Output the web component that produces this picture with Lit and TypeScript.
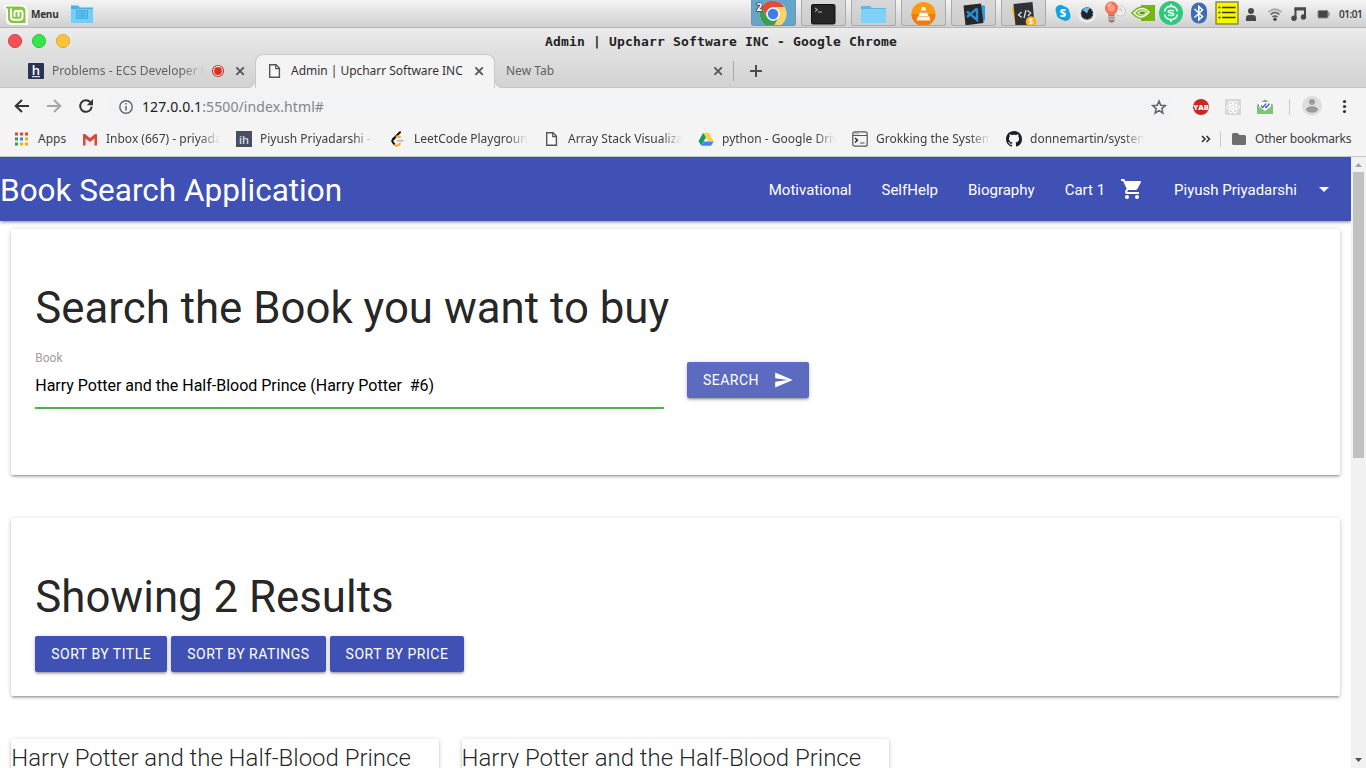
import { LitElement, html, svg, css } from "lit";
import { customElement } from "lit/decorators.js";

// Every glyph is drawn in desktop coordinates; the viewBox is the cell it occupies.
const glyph = (x: number, y: number, w: number, h: number, body: unknown) =>
  html`<svg class="glyph" width=${w} height=${h} viewBox="${x} ${y} ${w} ${h}" aria-hidden="true">${body}</svg>`;

const cross = (x: number) => glyph(x - 8, 63, 16, 16, svg`<path d="M${x - 3.6} 67.4l7.4 7.4m0-7.4l-7.4 7.4" stroke="#555" stroke-width="1.8" fill="none"/>`);

const page = svg`<path d="M2.7 1.7h6.3l3.4 3.5v9.1H2.7z" fill="#fafafa" stroke="#555" stroke-width="1.4"/><path d="M8.7 1.7v3.9h3.7" fill="none" stroke="#555" stroke-width="1.2"/>`;

const bookmarks = [
  { label: "Inbox (667) - priyadarshi", art: svg`<path d="M1.5 3h13v11.5h-13z" fill="#eee"/><path d="M1 14.5V3.6L8 9.3l7-5.7v10.9h-2.5V7.4L8 11 3.500 7.400v7.100z" fill="#d54b3d"/><path d="M1 3h2l5 4 5-4h2v2L8 10 1 5z" fill="#d54b3d"/>` },
  { label: "Piyush Priyadarshi - Int", art: svg`<path d="M0 0h16v16H0z" fill="#484f60"/><text x="8" y="12.500" text-anchor="middle" font-size="11" font-weight="600" fill="#d8dbe2" font-family="Open Sans, sans-serif">ih</text>` },
  { label: "LeetCode Playground", art: svg`<path d="M10 1.300L3.200 8.200" stroke="#111" stroke-width="2" fill="none" stroke-linecap="round"/><path d="M5 6.300L2.700 8.700q-1 1.300 0 2.500l2 2.400" stroke="#111" stroke-width="2" fill="none"/><path d="M4.500 13.500q2.500 2.500 4.500 0l1.500-1.300M6 6.200q2-1.900 4.600.5" stroke="#f9a825" stroke-width="2" fill="none"/><path d="M7 9.700h6.500" stroke="#bbb" stroke-width="1.800"/>` },
  { label: "Array Stack Visualization", art: page },
  { label: "python - Google Drive", art: svg`<path d="M5.300 1.700L8 6.300 3.200 14.600.5 10.200z" fill="#0f9d58"/><path d="M5.300 1.700h5.200l5.200 8.700h-5.200z" fill="#ffcd40"/><path d="M5.700 10.400h10L13 14.700H3.200z" fill="#4285f4"/>` },
  { label: "Grokking the System Design", art: svg`<rect x=".8" y=".8" width="14.400" height="14.400" rx="2" fill="none" stroke="#555" stroke-width="1.200"/><path d="M1 4.500h14" stroke="#555"/><path d="M2.500 2.700h4.500" stroke="#555" stroke-dasharray="1 1"/><path d="M3 7l2.500 2.300L3 11.600" fill="none" stroke="#222" stroke-width="1.400"/><path d="M8 12h4.500" stroke="#777" stroke-width="1.300"/>` },
  { label: "donnemartin/system-design", art: svg`<path fill="#1b1f23" d="M8 0C3.580 0 0 3.580 0 8c0 3.540 2.290 6.530 5.470 7.590.4.070.55-.17.55-.38 0-.19-.01-.82-.01-1.490-2.010.37-2.530-.49-2.690-.94-.09-.23-.48-.94-.82-1.130-.28-.15-.68-.52-.01-.53.63-.01 1.080.58 1.230.82.72 1.210 1.870.87 2.330.66.070-.52.28-.87.51-1.070-1.780-.2-3.640-.89-3.640-3.950 0-.87.31-1.590.82-2.150-.08-.2-.36-1.020.08-2.120 0 0 .67-.21 2.200.82.64-.18 1.320-.27 2-.27s1.360.09 2 .27c1.530-1.040 2.200-.82 2.200-.82.44 1.100.16 1.920.08 2.120.51.56.82 1.270.82 2.150 0 3.070-1.870 3.750-3.650 3.950.29.25.54.73.54 1.480 0 1.070-.01 1.930-.01 2.200 0 .21.15.46.55.38A8.010 8.010 0 0016 8c0-4.420-3.580-8-8-8z"/>` },
];

const apps = [
  svg`<circle cx="773" cy="14" r="13.300" fill="#fff"/><path d="M761.480 7.350A13.300 13.300 0 01784.520 7.350H773A6.700 6.700 0 00767.200 17.350z" fill="#e24a3d"/><path d="M784.520 7.350A13.300 13.300 0 01773 27.300L778.800 17.350A6.700 6.700 0 00773 7.350z" fill="#fdd365"/><path d="M773 27.300A13.300 13.300 0 01761.480 7.350L767.200 17.350A6.700 6.700 0 00778.800 17.350z" fill="#3b9d52"/><circle cx="773" cy="14" r="6.600" fill="#eef4fa"/><circle cx="773" cy="14" r="5.200" fill="#3d7ee8"/><text x="756.500" y="11" fill="#fff" stroke="#345" stroke-width="1.500" paint-order="stroke" font-size="10" font-weight="700" font-family="Open Sans, sans-serif">2</text>`,
  svg`<rect x="811.500" y="4.500" width="23.500" height="19.500" rx="1.500" fill="#262626" stroke="#111"/><path d="M815 8l2.500 1.700L815 11.500" fill="none" stroke="#ccc"/><path d="M818 12h4" stroke="#bbb"/>`,
  svg`<path d="M861 6h9l2 2h14v14.500h-25z" fill="#59b8e8"/><path d="M861 9h25v14h-25z" fill="#7fd1f8"/>`,
  svg`<circle cx="923.500" cy="14" r="12" fill="#f99a11"/><path d="M911.500 14a12 12 0 0024 0z" fill="#f27c08"/><path d="M922.300 7h2.600l3.800 9.500h-10.200z" fill="#fff"/><path d="M920.800 10.500h5.600l.8 2.200h-7.200z" fill="#f6951b"/><path d="M918 16l1.300 1h8.600l1.300-1 1.300 4.500h-14z" fill="#f4f4f4"/>`,
  svg`<path d="M982 5l3 1v14.500l-14 3z" fill="#2f9ee0"/><path d="M963.500 5.500l17.500-2 2.500 19.500-18 2.300z" fill="#262728"/><path d="M977 8.500v11.500l-10-8.500m10-3L967 17" fill="none" stroke="#278fd8" stroke-width="2.400"/>`,
  svg`<path d="M1011.500 7.500l5-1.500 2 18-3 .5z" fill="#f9b521"/><path d="M1013.500 4l19-2 2 22-19 2z" fill="#2e3135"/><path d="M1021.500 12l-3 3 3.300 2.500m5.700-7l3.200 2.500-2.700 3m-2-6l-2 8" fill="none" stroke="#ddd" stroke-width="1.300"/><circle cx="1031" cy="21.500" r="5.300" fill="#fbb01c"/><text x="1031" y="24.500" text-anchor="middle" font-size="8" font-weight="700" fill="#fff" font-family="Open Sans, sans-serif">$</text>`,
];

const navLinks = ["Motivational", "SelfHelp", "Biography"];

@customElement("desktop-panel")
class DesktopPanel extends LitElement {
  static styles = css`
    :host { display: block; height: 28px; font-family: "Noto Sans", sans-serif; color: #333; }
    .bar { display: flex; height: 28px; box-sizing: border-box; border-bottom: 1px solid #b5b5b5; background: linear-gradient(#f4f4f4, #d0d0d0); }
    .glyph { display: block; flex: none; }
    .menu { width: 39px; font: 700 10px/28px "Open Sans", sans-serif; padding-left: 1px; letter-spacing: -0.25px; }
    .apps { display: flex; gap: 5px; margin-left: 656px; }
    .app { box-sizing: border-box; width: 45px; height: 26px; overflow: hidden; border: 1px solid #aaa; border-top: 0; border-radius: 0 0 3px 3px; background: linear-gradient(#d8d8d8, #cdcdcd); display: flex; justify-content: center; }
    .app.on { background: #65a5c9; border-color: #6d98b0; }
    .tray { display: flex; margin-left: 5px; }
    .clock { font: 600 10px/28px "Open Sans", sans-serif; white-space: nowrap; margin-left: 2px; letter-spacing: -0.5px; }
  `;
  render() {
    return html`<div class="bar">
      ${glyph(0, 0, 30, 28, svg`<path d="M4 5h18q6 0 6 7v13H12q-6 0-6-6V9H4z" fill="#fff"/><path d="M6 6.500h14.500q5 0 5 5V23H13q-5 0-5-5V8.500H6z" fill="#86c440"/><path d="M11 8.500v8.300q0 3 3 3h5.500q3 0 3-3v-4q0-2-2-2t-2 2v4m0-4q0-2-2-2t-2 2v4" fill="none" stroke="#fff" stroke-width="2"/>`)}
      <div class="menu">Menu</div>
      ${glyph(70, 0, 25, 28, svg`<path d="M71 5.500h7l2 2h13V23H71z" fill="#47b2e5"/><path d="M71 9h22v14H71z" fill="#73cff9"/><path d="M76.500 10.500h11v8h-11z" fill="#5cc0ee" stroke="#46aede"/><path d="M79 13h6m-6 3h6" stroke="#3da8da"/>`)}
      <div class="apps">${apps.map((a, i) => html`<div class="app ${i ? "" : "on"}">${glyph(752 + i * 50, 0, 43, 27, a)}</div>`)}</div>
      <div class="tray">
        ${glyph(1051, 0, 24, 28, svg`<circle cx="1060.500" cy="10" r="5" fill="#12a5e0"/><circle cx="1065.500" cy="16" r="5" fill="#12a5e0"/><circle cx="1063" cy="13" r="6.700" fill="#12a5e0"/><text x="1063" y="17" text-anchor="middle" font-size="11" font-weight="800" fill="#fff" font-family="Open Sans, sans-serif">S</text>`)}
        ${glyph(1075, 0, 24, 28, svg`<circle cx="1087" cy="13.500" r="9.700" fill="#e9e9e9"/><circle cx="1087" cy="13.500" r="6.200" fill="#1b2229"/><path d="M1087 13.500l-4.500-3.500q3.500-3.500 7-2z" fill="#68b8e8"/><circle cx="1087" cy="13.500" r="5.500" fill="none" stroke="#ccc" stroke-width=".8" stroke-dasharray="1 2"/>`)}
        ${glyph(1099, 0, 28, 28, svg`<circle cx="1120.500" cy="11" r="5" fill="#ededed" stroke="#ccc"/><path d="M1119 9q3-1 2.500 2.500" fill="none" stroke="#bbb"/><path d="M1108.500 15c0-2-3.500-3-3.500-7a6.500 6.500 0 0113 0c0 4-3.500 5-3.500 7z" fill="#f37158"/><circle cx="1111.300" cy="8" r="3.600" fill="#fb9c86"/><path d="M1107.500 6.500q1-3 4-3" fill="none" stroke="#ffc0ac" stroke-width="1.500"/><path d="M1108.500 15h6v6l-1.500 1.500h-3l-1.500-1.500z" fill="#8e7d6d"/><path d="M1108.500 17h6m-6 2.300h6" stroke="#ddd"/>`)}
        ${glyph(1127, 0, 30, 28, svg`<path d="M1141 5h14v16h-14z" fill="#77b510"/><path d="M1131 13q6-7 12-7 6 1 9 6-4 7-11 7-6-1-10-6z" fill="#77b510"/><path d="M1134 13q4-4.500 9-4.500 4 .8 6 3.500-4 5-8.500 5-4-1-6.500-4z" fill="none" stroke="#f5f8ec" stroke-width="1.500"/><path d="M1138 12.800q5-4 8.500 0-4 4.500-8.500 0z" fill="#5f9500" stroke="#e7efce" stroke-width="1.200"/>`)}
        ${glyph(1157, 0, 28, 28, svg`<circle cx="1171" cy="13" r="12" fill="#31c77f"/><path d="M1164.500 11.500a6.700 6.700 0 0113 0M1164.500 14.500a6.700 6.700 0 0013 0" fill="none" stroke="#eafff3" stroke-width="1.600"/><path d="M1171 4v3m0 12v3" stroke="#eafff3" stroke-width="1.700"/><path d="M1174 10.800q-5.500-1-5.800.7c0 2 5.600 1 5.600 3-.3 1.500-4 1-5.800.4" fill="none" stroke="#eafff3" stroke-width="1.500"/>`)}
        ${glyph(1185, 0, 28, 28, svg`<rect x="1191" y="2.500" width="16" height="21" rx="8" fill="#3c6eb4"/><path d="M1194.500 9l8 7.500-3.700 3.500V6.500l3.700 3.500-8 7.500" fill="none" stroke="#fff" stroke-width="1.500"/>`)}
        ${glyph(1213, 0, 26, 28, svg`<path d="M1216 2h22v22h-22z" fill="#f7f700" stroke="#8c8c45" stroke-width="1.500"/><path d="M1222 7.500h13.500m-13.500 5h13.500m-13.500 5h13.500" stroke="#3a3a00" stroke-width="1.500"/><path d="M1218.500 7.500h2m-2 5h2m-2 5h2" stroke="#3a3a00" stroke-width="1.500"/>`)}
        ${glyph(1239, 0, 24, 28, svg`<circle cx="1251" cy="11" r="3" fill="#484848"/><path d="M1246 21v-3q0-3 3-3h4q3 0 3 3v3z" fill="#484848"/>`)}
        ${glyph(1263, 0, 24, 28, svg`<path d="M1268.500 12q6.500-5.500 13 0" fill="none" stroke="#aaa" stroke-width="1.700"/><path d="M1270.500 14.500q4.500-4 9 0" fill="none" stroke="#777" stroke-width="1.700"/><path d="M1272.500 17q2.500-2 5 0" fill="none" stroke="#555" stroke-width="1.500"/><circle cx="1275" cy="19.300" r="1.700" fill="#444"/>`)}
        ${glyph(1287, 0, 24, 28, svg`<path d="M1295.500 18V8.500h9.500v8" fill="none" stroke="#484848" stroke-width="2"/><path d="M1294.500 7.500h11.500v3h-11.500z" fill="#484848"/><circle cx="1294" cy="18.300" r="2.700" fill="#484848"/><circle cx="1303.500" cy="17" r="2.700" fill="#484848"/>`)}
        ${glyph(1311, 0, 26, 28, svg`<rect x="1318" y="10.500" width="10" height="7.500" rx="1" fill="#444" stroke="#8a8a8a"/><path d="M1329 12v4" stroke="#777"/>`)}
      </div>
      <div class="clock">01:01</div>
    </div>`;
  }
}

@customElement("browser-frame")
class BrowserFrame extends LitElement {
  static styles = css`
    :host { display: block; height: 129px; font-family: "Noto Sans", sans-serif; font-size: 12px; color: #444; }
    .glyph { display: block; flex: none; }
    .title { height: 26px; display: grid; grid-template-columns: 76px 1fr; background: linear-gradient(#ececec, #dedede); align-items: center; }
    .title b { font: 700 13px/26px "DejaVu Sans Mono", monospace; color: #222; text-align: center; white-space: nowrap; letter-spacing: 0.175px; padding-top: 1px; height: 25px; }
    .tabs { height: 34px; display: flex; align-items: center; background: linear-gradient(#e0e0e0, #d1d1d1); box-shadow: inset 0 -1px #c6c6c6; }
    .tab { display: flex; align-items: center; height: 34px; line-height: 34px; box-sizing: border-box; }
    .tab.first { width: 247px; padding-left: 28px; gap: 8px; color: #616161; }
    .curve { align-self: flex-end; }
    .tab.active { width: 240px; padding: 0 0 1px 11px; gap: 8px; background: #f4f4f4; border: 1px solid #c9c9c9; border-bottom: 0; border-radius: 8px 8px 0 0; color: #333; }
    .tab.last { width: 230px; padding-left: 3px; color: #616161; }
    .name { flex: none; overflow: hidden; white-space: nowrap; }
    .first .name { width: 153px; letter-spacing: 0.02px; -webkit-mask-image: linear-gradient(90deg, #000 84%, transparent); }
    .active .name { width: 173px; letter-spacing: -0.03px; }
    .last .name { width: 204px; }
    .first .name + .glyph { margin-left: -3px; }
    .first .glyph:last-child { margin-left: -2px; }
    .active .glyph:last-child { margin-left: -1px; }
    .tools { height: 36px; display: flex; align-items: center; background: #f4f4f4; }
    .omni { width: 1068px; height: 28px; margin-top: 1px; border-radius: 14px; background: #f1f3f4; display: flex; align-items: center; font-size: 14px; color: #80868b; }
    .url { flex: 1; line-height: 28px; letter-spacing: 0.1px; }
    .url span { color: #202124; }
    .marks { height: 33px; box-sizing: border-box; border-bottom: 1px solid #c6c6c6; display: flex; background: #f4f4f4; align-items: center; padding-bottom: 3px; color: #3c4043; }
    .apps-label { width: 44px; }
    .mark { display: flex; width: 154px; flex: none; gap: 8px; align-items: center; }
    .mark .name { width: 114px; -webkit-mask-image: linear-gradient(90deg, #000 82%, transparent); }
    .other { white-space: nowrap; letter-spacing: -0.2px; }
  `;
  render() {
    return html`
      <div class="title">
        ${glyph(0, 28, 76, 26, svg`<circle cx="15" cy="41" r="6.600" fill="#f55258" stroke="#dc444c"/><circle cx="39" cy="41" r="6.600" fill="#37e64e" stroke="#2dc842"/><circle cx="63" cy="41" r="6.600" fill="#fcc238" stroke="#e4aa2b"/>`)}
        <b>Admin | Upcharr Software INC - Google Chrome</b>
      </div>
      <div class="tabs">
        <div class="tab first">
          ${glyph(28, 63, 16, 16, svg`<rect x="28" y="63" width="16" height="16" rx="1" fill="#293254"/><text x="36" y="74.500" text-anchor="middle" font-size="13" font-weight="600" fill="#fff" font-family="Open Sans, sans-serif">h</text><path d="M32 76.700h8" stroke="#fff"/>`)}
          <div class="name">Problems - ECS Developer Hiring</div>
          ${glyph(210, 63, 16, 16, svg`<circle cx="218" cy="71" r="5.500" fill="#fff" stroke="#d93025" stroke-width="1.200"/><circle cx="218" cy="71" r="3.900" fill="#d93025"/>`)}
          ${cross(240)}
        </div>
        <div class="curve">${glyph(0, 0, 8, 8, svg`<path d="M0 8q8 0 8-8v8z" fill="#f4f4f4"/><path d="M0 7.500q7.500 0 7.500-7.500" fill="none" stroke="#c9c9c9"/>`)}</div>
        <div class="tab active">
          ${glyph(0, 0, 16, 16, page)}
          <div class="name">Admin | Upcharr Software INC</div>
          ${cross(479)}
        </div>
        <div class="curve">${glyph(0, 0, 8, 8, svg`<path d="M8 8q-8 0-8-8v8z" fill="#f4f4f4"/><path d="M8 7.500q-7.500 0-7.500-7.500" fill="none" stroke="#c9c9c9"/>`)}</div>
        <div class="tab last"><div class="name">New Tab</div>${cross(718)}</div>
        ${glyph(733, 54, 40, 34, svg`<path d="M733.500 61v20" stroke="#a8a8a8"/><path d="M750 71h12m-6-6v12" stroke="#4b4b4b" stroke-width="2"/>`)}
      </div>
      <div class="tools">
        ${glyph(0, 88, 108, 36, svg`<path d="M29 106H16m6-6l-6.300 6 6.300 6" fill="none" stroke="#333" stroke-width="2"/><path d="M47 106h13m-6-6l6.300 6-6.300 6" fill="none" stroke="#a5a5a5" stroke-width="2"/><path d="M90.300 102.200a5.800 5.800 0 101.400 4.500" fill="none" stroke="#333" stroke-width="2"/><path d="M93 99v6.200h-6.200z" fill="#333"/>`)}
        <div class="omni">
          ${glyph(108, 93, 34, 28, svg`<circle cx="126" cy="107" r="6.200" fill="none" stroke="#5f6368" stroke-width="1.400"/><path d="M126 106v4.500m0-7.500v1.600" stroke="#5f6368" stroke-width="1.500"/>`)}
          <div class="url"><span>127.0.0.1</span>:5500/index.html#</div>
          ${glyph(1146, 93, 30, 28, svg`<path d="M1159 101l1.700 4.300 4.600.3-3.500 3 1.100 4.500-3.900-2.500-3.900 2.500 1.100-4.500-3.500-3 4.600-.3z" fill="none" stroke="#5f6368" stroke-width="1.500"/>`)}
        </div>
        ${glyph(1176, 88, 190, 36, svg`<circle cx="1201" cy="107" r="8" fill="#c62822"/><text x="1201" y="110" text-anchor="middle" font-size="7.500" font-weight="800" fill="#fff" font-family="Open Sans, sans-serif">YAB</text>
          <path d="M1225 99h16v16h-16z" fill="#d8d8d8"/><g fill="none" stroke="#fff"><ellipse cx="1233" cy="107" rx="6.500" ry="2.500"/><ellipse cx="1233" cy="107" rx="6.500" ry="2.500" transform="rotate(60 1233 107)"/><ellipse cx="1233" cy="107" rx="6.500" ry="2.500" transform="rotate(120 1233 107)"/></g><circle cx="1233" cy="107" r="1.300" fill="#fff"/>
          <path d="M1257 105l8-5.500 8 5.500v9h-16z" fill="#66b96a"/><path d="M1259 102h12v6l-6 4-6-4z" fill="#fff"/><path d="M1257 105l8 6 8-6v9h-16z" fill="#7cc47a"/><path d="M1261 105.500l1.700 2 3.500-4m-1 3l1 1 3.300-4" fill="none" stroke="#5b52c7" stroke-width="1.200"/>
          <path d="M1289.500 99v16" stroke="#c9c9c9"/><circle cx="1312" cy="106" r="10" fill="#dedede"/><circle cx="1312" cy="102" r="3" fill="#9b9b9b"/><ellipse cx="1312" cy="109.500" rx="6" ry="3.200" fill="#9b9b9b"/>
          <g fill="#333"><circle cx="1344.500" cy="101.500" r="1.600"/><circle cx="1344.500" cy="106.500" r="1.600"/><circle cx="1344.500" cy="111.500" r="1.600"/></g>`)}
      </div>
      <div class="marks">
        ${glyph(0, 0, 38, 16, svg`<path d="M15 1.500h3v3h-3zm5 0h3v3h-3zm5 0h3v3h-3z" fill="#ea4335"/><path d="M15 6.500h3v3h-3zM15 11.500h3v3h-3z" fill="#2f9e57"/><path d="M20 6.500h3v3h-3z" fill="#2a86f3"/><path d="M25 6.500h3v3h-3zM20 11.500h3v3h-3zm5 0h3v3h-3z" fill="#f9ab00"/>`)}
        <div class="apps-label">Apps</div>
        ${bookmarks.map((b) => html`<div class="mark">${glyph(0, 0, 16, 16, b.art)}<div class="name">${b.label}</div></div>`)}
        ${glyph(1160, 130, 95, 18, svg`<path d="M1202 136l3 3-3 3m4.500-6l3 3-3 3" fill="none" stroke="#333" stroke-width="1.600"/><path d="M1220.500 131.500v15.500" stroke="#c9c9c9"/><path d="M1232 134.500q0-1.500 1.500-1.500h4l2 2h5q1.500 0 1.500 1.500v7q0 1.500-1.500 1.500h-11q-1.500 0-1.500-1.500z" fill="#6e6e6e"/>`)}
        <div class="other">Other bookmarks</div>
      </div>`;
  }
}

@customElement("book-page")
class BookPage extends LitElement {
  static styles = css`
    :host { display: grid; grid-template-columns: 1351px 15px; height: 611px; font: 15px/1.5 Roboto, sans-serif; color: rgba(0, 0, 0, 0.87); overflow: hidden; }
    .glyph { display: block; flex: none; }
    .view { height: 611px; overflow: hidden; background: #fff; }
    .nav, .card, .btn { box-shadow: 0 2px 2px 0 rgba(0, 0, 0, 0.14), 0 3px 1px -2px rgba(0, 0, 0, 0.12), 0 1px 5px 0 rgba(0, 0, 0, 0.2); }
    .nav { height: 64px; background: #3f51b5; color: #fff; display: flex; justify-content: space-between; line-height: 64px; padding-top: 1px; box-sizing: border-box; }
    .brand { font-size: 31.5px; line-height: 66px; height: 63px; }
    .links { display: flex; height: 64px; }
    .link { padding: 0 15px; display: flex; align-items: center; gap: 15px; white-space: nowrap; }
    .link .glyph { margin-top: -2px; }
    .row { padding: 0 11.25px; margin-bottom: 20px; display: flex; }
    .card { flex: 1; margin: 7.5px 0 15px; border-radius: 2px; background: #fff; padding: 24px; box-sizing: border-box; }
    .search { height: 246.5px; }
    h3 { font-size: 43.8px; line-height: 48.18px; font-weight: 400; margin: 31.2px 0 15.5px; }
    .form { display: flex; gap: 22.5px; padding-top: 15px; }
    .field { width: 629.2px; }
    .label { font-size: 12px; line-height: 18px; margin: -13px 0 -5px; color: #9e9e9e; }
    .input { font-size: 16px; line-height: 47px; height: 45px; border-bottom: 1px solid #4caf50; box-shadow: 0 1px #4caf50; color: #000; white-space: pre; letter-spacing: -0.007px; }
    .btn { display: inline-flex; height: 36px; line-height: 36px; padding: 0 16px; background: #3f51b5; color: #fff; border-radius: 2px; font-size: 14px; letter-spacing: 0.5px; }
    .go { background: #5c6bc0; gap: 15px; align-items: center; box-sizing: border-box; width: 122px; }
    .sorts { display: flex; gap: 4px; }
    .sorts .btn { letter-spacing: 0.51px; }
    .books { gap: 22.5px; margin: 0; }
    .book { flex: none; width: 427.8px; height: 300px; padding: 1px 0 0; font-size: 24px; font-weight: 300; line-height: 36px; letter-spacing: -0.02px; }
    .scroll { background: #f1f1f1; display: flex; flex-direction: column; align-items: center; }
    .thumb { width: 11px; height: 286px; background: #c1c1c1; }
    .space { flex: 1; }
  `;
  render() {
    return html`<div class="view">
        <div class="nav">
          <div class="brand">Book Search Application</div>
          <div class="links">
            ${navLinks.map((l) => html`<div class="link">${l}</div>`)}
            <div class="link">Cart 1 ${glyph(0, 0, 24, 24, svg`<path fill="#fff" d="M7 18c-1.100 0-1.990.9-1.990 2S5.900 22 7 22s2-.9 2-2-.9-2-2-2zM1 2v2h2l3.600 7.590-1.350 2.450c-.16.280-.25.610-.25.960 0 1.100.9 2 2 2h12v-2H7.420c-.14 0-.25-.11-.25-.25l.03-.12.9-1.630h7.450c.75 0 1.410-.41 1.750-1.030l3.580-6.490c.08-.14.12-.31.12-.48 0-.55-.45-1-1-1H5.210l-.94-2H1zm16 16c-1.100 0-1.990.9-1.990 2s.89 2 1.990 2 2-.9 2-2-.9-2-2-2z"/>`)}</div>
            <div class="link">Piyush Priyadarshi ${glyph(0, 0, 24, 24, svg`<path fill="#fff" d="M7 10l5 5 5-5z"/>`)}</div>
          </div>
        </div>
        <div class="row"><div class="card search">
          <h3>Search the Book you want to buy</h3>
          <div class="form">
            <div class="field"><div class="label">Book</div><div class="input">Harry Potter and the Half-Blood Prince (Harry Potter  #6)</div></div>
            <div class="btn go">SEARCH ${glyph(0, 0, 20, 20, svg`<path fill="#fff" d="M1.200 17.500L18.700 10 1.200 2.500v5.800L13.700 10 1.200 11.700z"/>`)}</div>
          </div>
        </div></div>
        <div class="row"><div class="card">
          <h3>Showing 2 Results</h3>
          <div class="sorts"><div class="btn">SORT BY TITLE</div><div class="btn">SORT BY RATINGS</div><div class="btn">SORT BY PRICE</div></div>
        </div></div>
        <div class="row books">
          <div class="card book">Harry Potter and the Half-Blood Prince</div>
          <div class="card book">Harry Potter and the Half-Blood Prince</div>
        </div>
      </div>
      <div class="scroll">
        ${glyph(0, 0, 15, 15, svg`<path d="M4 10l3.500-4 3.500 4z" fill="#a3a3a3"/>`)}
        <div class="thumb"></div><div class="space"></div>
        ${glyph(0, 0, 15, 15, svg`<path d="M4 5l3.500 4 3.500-4z" fill="#505050"/>`)}
      </div>`;
  }
}

@customElement("app-root")
class AppRoot extends LitElement {
  static styles = css`
    :host { display: block; width: 1366px; height: 768px; overflow: hidden; background: #fff; }
  `;
  render() {
    return html`<desktop-panel></desktop-panel><browser-frame></browser-frame><book-page></book-page>`;
  }
}
